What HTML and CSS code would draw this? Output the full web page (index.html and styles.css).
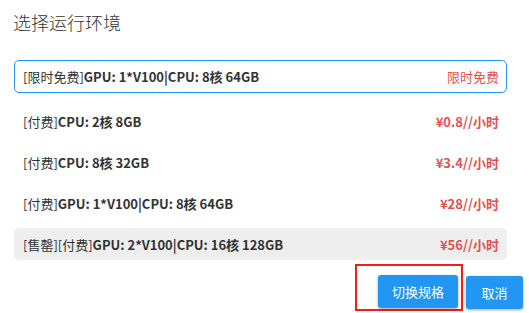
FILE: index.html
```html
<!DOCTYPE html>
<html lang="zh-CN">
<head>
<meta charset="utf-8">
<link rel="stylesheet" href="styles.css">
</head>
<body>
<div class="dialog">
  <h1 class="title">选择运行环境</h1>
  <ul class="list">
    <li class="row row-active"><span class="name"><span class="tag">[限时免费]</span>GPU: 1*V100|CPU: 8核 64GB</span><span class="price price-free">限时免费</span></li>
    <li class="row"><span class="name"><span class="tag">[付费]</span>CPU: 2核 8GB</span><span class="price">¥0.8//小时</span></li>
    <li class="row"><span class="name"><span class="tag">[付费]</span>CPU: 8核 32GB</span><span class="price">¥3.4//小时</span></li>
    <li class="row"><span class="name"><span class="tag">[付费]</span>GPU: 1*V100|CPU: 8核 64GB</span><span class="price">¥28//小时</span></li>
    <li class="row row-soldout"><span class="name"><span class="tag">[售罄][付费]</span>GPU: 2*V100|CPU: 16核 128GB</span><span class="price">¥56//小时</span></li>
  </ul>
  <div class="footer">
    <div class="highlight"><button class="btn">切换规格</button></div>
    <button class="btn btn-cancel">取消</button>
  </div>
</div>
</body>
</html>
```

FILE: styles.css
```css
* { box-sizing: border-box; }
html, body { margin: 0; padding: 0; background: #fff; }
body {
  font-family: "Noto Sans CJK SC", "Noto Sans", sans-serif;
  color: #333;
}
.dialog {
  width: 529px;
  height: 313px;
  padding: 10px 6px 0 14px;
  overflow: hidden;
}
.title {
  margin: 0 0 26px -1px;
  font-size: 18px;
  line-height: 24px;
  font-weight: 300;
  color: #333;
}
.list {
  list-style: none;
  margin: 0;
  padding: 0;
  width: 493px;
  display: flex;
  flex-direction: column;
  gap: 9px;
}
.row {
  height: 32px;
  display: flex;
  align-items: center;
  justify-content: space-between;
  padding: 0 7px 0 8px;
  border: 1px solid transparent;
  border-radius: 5px;
  font-size: 13px;
}
.row-active {
  height: 33px;
  border-color: #2196f3;
  margin-bottom: 3px;
}
.row-soldout {
  background: #eeeeee;
  border-color: #eeeeee;
}
.name {
  font-weight: 700;
  color: #333;
}
.tag {
  font-weight: 400;
}
.price {
  color: #e05252;
  font-weight: 700;
}
.price-free { font-weight: 400; }
.footer {
  display: flex;
  justify-content: flex-end;
  align-items: flex-end;
  margin-top: 4px;
  gap: 3px;
}
.highlight {
  border: 2px solid #ff1a1a;
  padding: 9px 3px 0 21px;
  height: 47px;
}
.btn {
  display: block;
  border: 0;
  border-radius: 3px;
  background: #2196f3;
  color: #fff;
  font-family: "Noto Sans CJK SC", sans-serif;
  font-size: 13px;
  height: 33px;
  width: 80px;
  padding: 0;
  box-shadow: 0 1px 3px rgba(0,0,0,0.35);
}
.btn-cancel {
  width: 57px;
  margin-bottom: 2px;
}
```
